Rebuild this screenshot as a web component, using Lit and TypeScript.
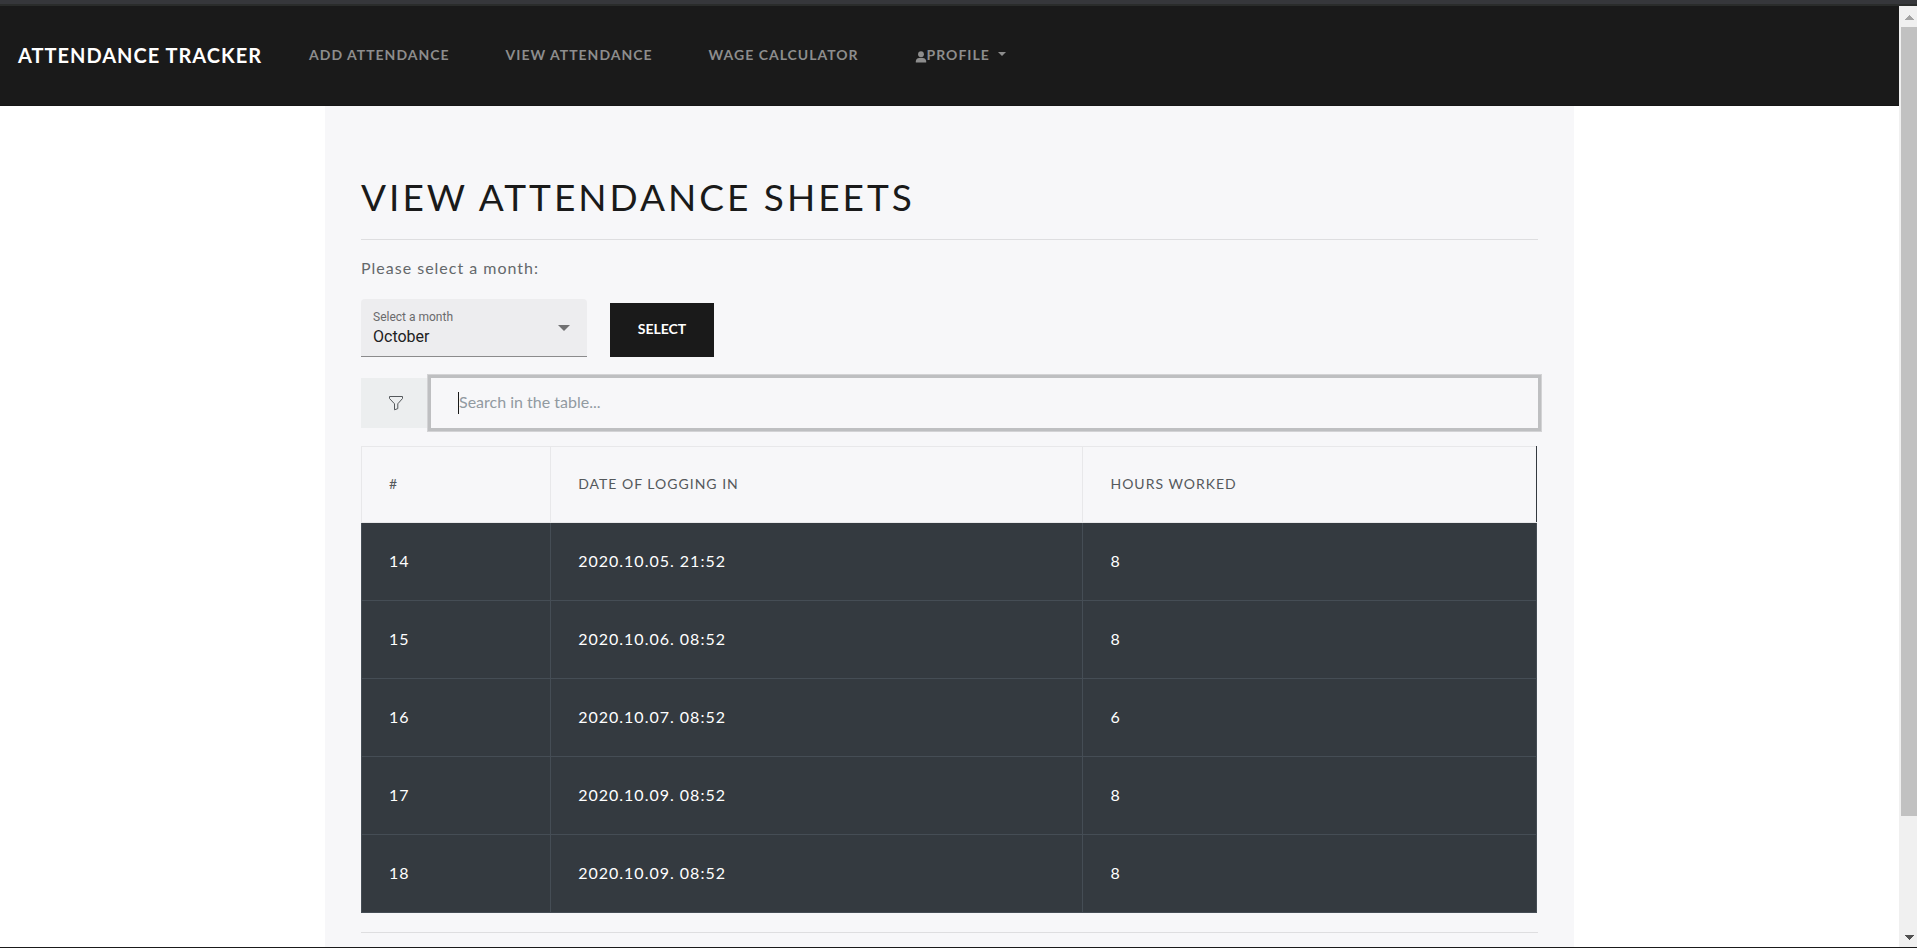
import { LitElement, html, css, svg } from "lit";
import { customElement, state } from "lit/decorators.js";

interface Entry {
  id: number;
  date: string;
  hours: number;
}

const MONTHS = [
  "January", "February", "March", "April", "May", "June",
  "July", "August", "September", "October", "November", "December",
];

const ENTRIES: Entry[] = [
  { id: 14, date: "2020.10.05. 21:52", hours: 8 },
  { id: 15, date: "2020.10.06. 08:52", hours: 8 },
  { id: 16, date: "2020.10.07. 08:52", hours: 6 },
  { id: 17, date: "2020.10.09. 08:52", hours: 8 },
  { id: 18, date: "2020.10.09. 08:52", hours: 8 },
];

@customElement("attendance-nav")
export class AttendanceNav extends LitElement {
  static styles = css`
    :host {
      display: block;
      background: #1a1a1a;
      font-family: Lato, "Open Sans", sans-serif;
    }
    .bar {
      display: flex;
      align-items: center;
      padding: 37px 18px 38px;
      border-bottom: 1px solid #161616;
      line-height: 24px;
    }
    a {
      color: #8d8d8d;
      text-decoration: none;
      text-transform: uppercase;
      white-space: nowrap;
    }
    .brand {
      color: #fff;
      font-size: 20px;
      font-weight: 700;
      letter-spacing: 1px;
      margin-right: 47px;
    }
    .links {
      display: flex;
      gap: 56px;
      margin: 0;
      padding: 0;
      list-style: none;
      font-size: 14px;
      font-weight: 700;
      letter-spacing: 1px;
    }
    .profile {
      display: flex;
      align-items: center;
    }
    .person {
      width: 12px;
      height: 12px;
      margin-top: 4px;
    }
    .caret {
      margin-left: 8px;
      margin-bottom: 2px;
      border-top: 4px solid;
      border-left: 4px solid transparent;
      border-right: 4px solid transparent;
    }
  `;

  render() {
    return html`
      <nav class="bar">
        <a class="brand" href="#">Attendance Tracker</a>
        <ul class="links">
          <li><a href="#add">Add attendance</a></li>
          <li><a href="#view">View attendance</a></li>
          <li><a href="#wage">Wage calculator</a></li>
          <li>
            <a class="profile" href="#profile">
              <svg class="person" viewBox="0 0 12 12" fill="currentColor" aria-hidden="true">
                <circle cx="6" cy="3.2" r="2.9" />
                <path d="M.8 11.5V10C.8 7.9 3 6.7 6 6.7s5.200 1.200 5.200 3.300v1.500z" />
              </svg>Profile<span class="caret"></span>
            </a>
          </li>
        </ul>
      </nav>
    `;
  }
}

@customElement("scroll-track")
export class ScrollTrack extends LitElement {
  static styles = css`
    :host {
      display: flex;
      flex-direction: column;
      flex: 0 0 18px;
      background: #f0f0f0;
    }
    .arrow {
      flex: 0 0 21px;
      width: 18px;
    }
    .lane {
      flex: 1;
      padding-left: 2px;
    }
    .thumb {
      height: 87.8%;
      background: #c1c1c1;
    }
  `;

  render() {
    return html`
      <svg class="arrow" viewBox="0 0 18 21" aria-hidden="true">
        ${svg`<path d="M6 14v-1h1v-1h1v-1h1v-1h1V9h1v1h1v1h1v1h1v1h1v1z" fill="#a3a3a3" />`}
      </svg>
      <div class="lane"><div class="thumb"></div></div>
      <svg class="arrow" viewBox="0 0 18 21" aria-hidden="true">
        ${svg`<path d="M6 9h9v1h-1v1h-1v1h-1v1h-1v1h-1v-1H9v-1H8v-1H7v-1H6z" fill="#505050" />`}
      </svg>
    `;
  }
}

@customElement("app-root")
export class AppRoot extends LitElement {
  static styles = css`
    :host {
      display: flex;
      flex-direction: column;
      height: 100vh;
      overflow: hidden;
      box-sizing: border-box;
      background: #fff;
      border-bottom: 1px solid #1a1a1a;
      color: #55595c;
      font-family: Lato, "Open Sans", sans-serif;
      font-size: 16px;
    }
    * {
      box-sizing: border-box;
    }
    .chrome {
      flex: 0 0 6px;
      background: #36373b;
      border-bottom: 2px solid #2a2c2b;
    }
    .viewport {
      display: flex;
      flex: 1;
      min-height: 0;
    }
    .page {
      display: flex;
      flex-direction: column;
      flex: 1;
      min-width: 0;
      overflow: hidden;
    }
    attendance-nav {
      flex: none;
    }
    .sheet {
      flex: 1 0 auto;
      width: 100%;
      max-width: 1249px;
      margin: 0 auto;
      padding: 68px 36px;
      background: #f7f7f9;
    }
    h1 {
      margin: 0;
      color: #1a1a1a;
      font-size: 37px;
      font-weight: 400;
      line-height: 46px;
      letter-spacing: 3px;
      text-transform: uppercase;
    }
    hr {
      margin: 19px 0 18px;
      border: 0;
      border-top: 1px solid #dedee0;
    }
    .prompt {
      margin: 0;
      color: #64686b;
      line-height: 20px;
      letter-spacing: 1px;
    }
    .picker {
      display: flex;
      align-items: flex-end;
      gap: 23px;
      margin-top: 21px;
    }
    .field {
      display: flex;
      align-items: center;
      width: 226px;
      height: 58px;
      padding: 0 17px 0 12px;
      border-bottom: 1px solid #8b8b8c;
      border-radius: 4px 4px 0 0;
      background: #ededef;
      font-family: Roboto, sans-serif;
    }
    .stack {
      display: flex;
      flex-direction: column;
      flex: 1;
      padding-top: 2px;
    }
    .field label {
      color: #6a6a6c;
      font-size: 12px;
      line-height: 16px;
    }
    .field select {
      appearance: none;
      padding: 0;
      border: 0;
      outline: 0;
      background: transparent;
      color: #212122;
      font: inherit;
      line-height: 24px;
    }
    .drop {
      border-top: 6px solid #717172;
      border-left: 6px solid transparent;
      border-right: 6px solid transparent;
    }
    .submit {
      width: 104px;
      height: 54px;
      padding: 0 0 3px;
      border: 0;
      background: #1a1a1a;
      color: #fff;
      font-family: inherit;
      font-size: 14px;
      font-weight: 700;
      text-transform: uppercase;
    }
    .search {
      display: flex;
      height: 50px;
      margin: 21px 0 18px;
    }
    .addon {
      display: flex;
      align-items: center;
      justify-content: center;
      flex: 0 0 70px;
      background: #eceeef;
    }
    .funnel {
      width: 16px;
      height: 16px;
    }
    .box {
      display: flex;
      align-items: center;
      flex: 1;
      padding: 0 27px;
      background: #f7f7f9;
      box-shadow: 0 0 0 3px #bebfc1, 0 0 0 4px #d3d3d5;
    }
    .cursor {
      width: 1px;
      height: 22px;
      background: #1a1a1a;
    }
    .box input {
      flex: 1;
      min-width: 0;
      padding: 0 0 3px;
      border: 0;
      outline: 0;
      background: transparent;
      color: #55595c;
      font: inherit;
    }
    .box input::placeholder {
      color: #919aa1;
      opacity: 1;
    }
    table {
      width: calc(100% - 1px);
      border-collapse: collapse;
      table-layout: fixed;
      letter-spacing: 1px;
    }
    th,
    td {
      padding: 0 27px 3px;
      text-align: left;
    }
    th {
      height: 76px;
      border: 1px solid #e8e8ea;
      font-size: 14px;
      font-weight: 400;
      text-transform: uppercase;
    }
    th:last-child {
      border-right-color: #343a40;
    }
    td {
      height: 78px;
      border: 1px solid #454d55;
      background: #343a40;
      color: #fff;
    }
    .col-id {
      width: 16.1%;
    }
    .col-date {
      width: 45.3%;
    }
  `;

  @state() private month = "October";
  @state() private query = "";

  private get rows(): Entry[] {
    const q = this.query.trim().toLowerCase();
    return ENTRIES.filter((e) => `${e.id} ${e.date} ${e.hours}`.toLowerCase().includes(q));
  }

  render() {
    return html`
      <div class="chrome"></div>
      <div class="viewport">
        <div class="page">
          <attendance-nav></attendance-nav>
          <main class="sheet">
            <h1>View attendance sheets</h1>
            <hr />
            <p class="prompt">Please select a month:</p>
            <div class="picker">
              <div class="field">
                <div class="stack">
                  <label for="month">Select a month</label>
                  <select
                    id="month"
                    @change=${(e: Event) => (this.month = (e.target as HTMLSelectElement).value)}
                  >
                    ${MONTHS.map((m) => html`<option ?selected=${m === this.month}>${m}</option>`)}
                  </select>
                </div>
                <span class="drop"></span>
              </div>
              <button class="submit" type="button">Select</button>
            </div>
            <div class="search">
              <label class="addon" for="search" aria-label="Search in the table">
                <svg class="funnel" viewBox="0 0 16 16" fill="none" stroke="#55595c" aria-hidden="true">
                  <path d="M1.500 1.500h13v2L9.800 8.800v4.800l-3.300 1.200v-6L1.500 3.500z" stroke-linejoin="round" />
                </svg>
              </label>
              <div class="box">
                <span class="cursor"></span>
                <input
                  id="search"
                  type="text"
                  placeholder="Search in the table..."
                  @input=${(e: Event) => (this.query = (e.target as HTMLInputElement).value)}
                />
              </div>
            </div>
            <table>
              <thead>
                <tr>
                  <th class="col-id" scope="col">#</th>
                  <th class="col-date" scope="col">Date of logging in</th>
                  <th scope="col">Hours worked</th>
                </tr>
              </thead>
              <tbody>
                ${this.rows.map(
                  (r) => html`<tr><td>${r.id}</td><td>${r.date}</td><td>${r.hours}</td></tr>`
                )}
              </tbody>
            </table>
            <hr />
          </main>
        </div>
        <scroll-track></scroll-track>
      </div>
    `;
  }
}
